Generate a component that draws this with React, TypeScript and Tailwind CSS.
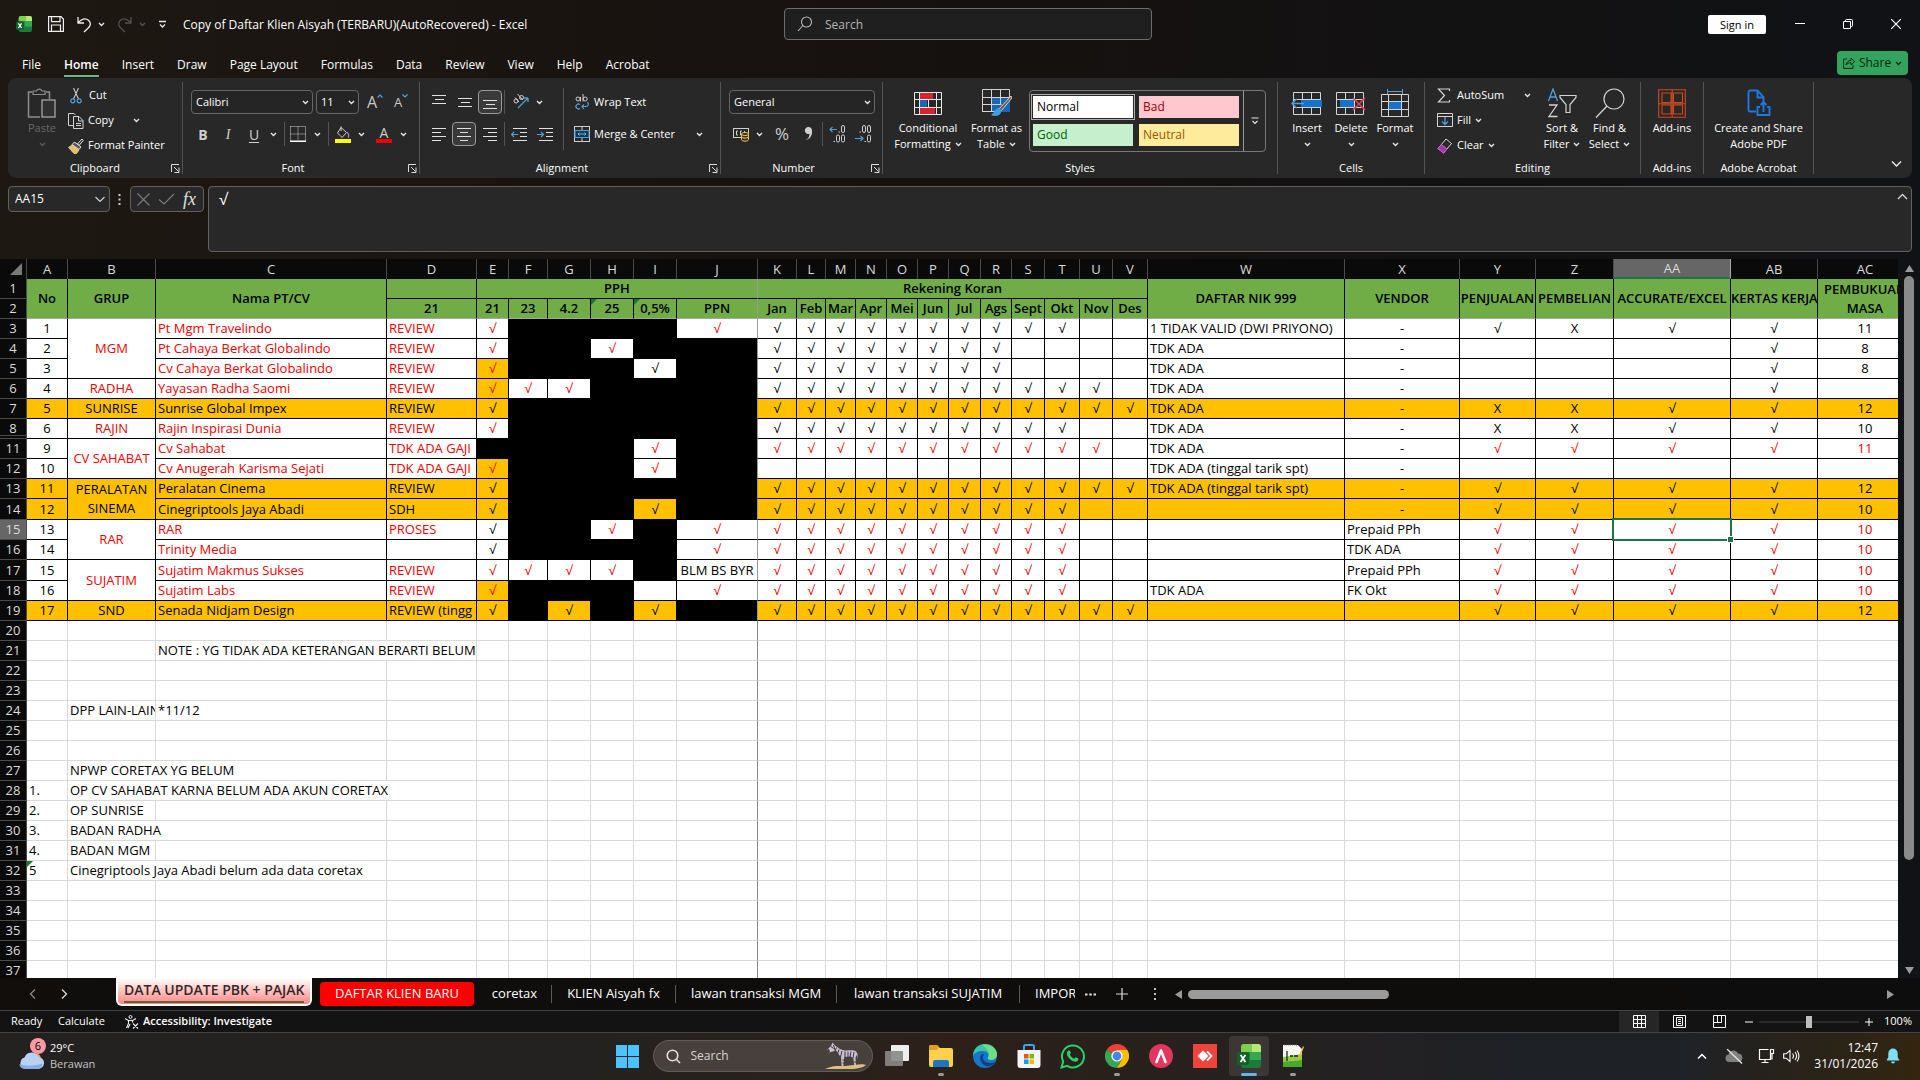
import React from "react";
import type { ReactNode } from "react";

/* ---------- small building blocks ---------- */

function Svg({ w, h, children, vb }: { w: number; h: number; children: ReactNode; vb?: string }) {
  return (
    <svg width={w} height={h} viewBox={vb ?? `0 0 ${w} ${h}`} fill="none" className="block shrink-0" aria-hidden="true">
      {children}
    </svg>
  );
}

function Chevron({ color = "#e6e6e6" }: { color?: string }) {
  return (
    <Svg w={7} h={5}>
      <path d="M1 1l2.5 2.5L6 1" stroke={color} strokeWidth="1.4" />
    </Svg>
  );
}

function IconBtn({ label, className, children }: { label: string; className: string; children: ReactNode }) {
  return (
    <button type="button" aria-label={label} className={`flex h-6 shrink-0 items-center justify-center ${className}`}>
      {children}
    </button>
  );
}

const Divider = () => <div className="my-1 w-px shrink-0 bg-[#565452]" />;

function Launcher() {
  return (
    <button type="button" aria-label="More options" className="absolute right-0.5 top-1.5">
      <Svg w={9} h={9}>
        <path d="M0.5 8V0.5H8M3 3l4.5 4.5M8 3.5V8.5H3.5" stroke="#dcdcdc" />
      </Svg>
    </button>
  );
}

function Group({ name, className, launcher, labelClass = "", children }: { name: string; className: string; launcher?: boolean; labelClass?: string; children: ReactNode }) {
  return (
    <>
      <section aria-label={name} className={`flex shrink-0 flex-col ${className}`}>
        <div className="flex h-20">{children}</div>
        <div className={`relative h-5 text-center leading-5 ${labelClass}`}>
          {name}
          {launcher && <Launcher />}
        </div>
      </section>
      <Divider />
    </>
  );
}

function Big({ className, icon, lines, chevron }: { className: string; icon: ReactNode; lines: string[]; chevron?: boolean }) {
  return (
    <button type="button" className={`flex shrink-0 flex-col items-center pt-2 ${className}`}>
      <span className="flex h-[34px] items-center justify-center">{icon}</span>
      {lines.map((l, i) => (
        <span key={l} className="flex items-center gap-1 whitespace-nowrap leading-4">
          {l}
          {chevron && lines.length > 1 && i === lines.length - 1 && <Chevron />}
        </span>
      ))}
      {chevron && lines.length === 1 && (
        <span className="flex h-4 items-center">
          <Chevron />
        </span>
      )}
    </button>
  );
}

/* ---------- icons ---------- */

const ExcelLogo = ({ size }: { size: number }) => (
  <Svg w={size} h={size} vb="0 0 24 24">
    <rect x="4" y="0" width="20" height="24" rx="3" fill="#1e7a3a" />
    <path d="M4 3a3 3 0 0 1 3-3h9v8H4z" fill="#7ccf4c" />
    <path d="M15 0h6a3 3 0 0 1 3 3v5h-9z" fill="#b5ea72" />
    <path d="M13 8h11v8H13z" fill="#35a850" />
    <rect x="0" y="8" width="12" height="13" rx="2.5" fill="#14602d" />
    <path d="M3.6 11l4.8 7M8.4 11l-4.8 7" stroke="#fff" strokeWidth="1.8" />
  </Svg>
);

const lineSets: Record<string, [number, number][]> = {
  left: [[0, 14], [0, 9], [0, 14], [0, 9]],
  center: [[0, 14], [3, 11], [0, 14], [3, 11]],
  right: [[0, 14], [5, 14], [0, 14], [5, 14]],
};

const Lines = ({ kind }: { kind: string }) => (
  <Svg w={14} h={15}>
    {lineSets[kind].map(([a, b], i) => (
      <path key={i} d={`M${a} ${1.5 + i * 4}H${b}`} stroke="#e0e0e0" />
    ))}
  </Svg>
);

const VLines = ({ top }: { top: number }) => (
  <Svg w={14} h={18}>
    <path d={`M0 ${top + 0.5}h14M3 ${top + 4.5}h9M0 ${top + 8.5}h14`} stroke="#e0e0e0" />
  </Svg>
);

const Indent = ({ out }: { out?: boolean }) => (
  <Svg w={16} h={15}>
    <path d="M2 1.5h14M9 5.5h7M9 9.5h7M2 13.5h14" stroke="#e0e0e0" />
    <path d={out ? "M7 7.5H0.5M3 5L0.5 7.5 3 10" : "M0 7.5h6.500M4 5l2.500 2.500L4 10"} stroke="#4f9fd8" strokeWidth="1.2" />
  </Svg>
);

const Decimals = ({ inc }: { inc?: boolean }) => (
  <Svg w={17} h={18}>
    {inc ? (
      <>
        <path d="M8 4.500H1M3.500 2L1 4.500 3.500 7" stroke="#4f9fd8" strokeWidth="1.2" />
        <rect x="12.500" y=".500" width="3" height="7" rx="1.500" stroke="#d0d0d0" />
        <rect x="7.500" y="10" width="3" height="7" rx="1.500" stroke="#d0d0d0" />
        <rect x="12.500" y="10" width="3" height="7" rx="1.500" stroke="#d0d0d0" />
        <path d="M9.500 7h1.500M4.500 16.500H6" stroke="#d0d0d0" />
      </>
    ) : (
      <>
        <rect x="7.500" y=".500" width="3" height="7" rx="1.500" stroke="#d0d0d0" />
        <rect x="12.500" y=".500" width="3" height="7" rx="1.500" stroke="#d0d0d0" />
        <rect x="12.500" y="10" width="3" height="7" rx="1.500" stroke="#d0d0d0" />
        <path d="M4.500 7H6M9.500 16.500H11" stroke="#d0d0d0" />
        <path d="M0 13.500h8M5.500 11L8 13.500 5.500 16" stroke="#4f9fd8" strokeWidth="1.2" />
      </>
    )}
  </Svg>
);

/* ---------- title bar and menu ---------- */

function TitleBar() {
  return (
    <header className="flex h-12 shrink-0 items-center pl-4">
      <div className="flex min-w-0 flex-1 items-center">
        <ExcelLogo size={16} />
        <button type="button" aria-label="Save" className="ml-4">
          <Svg w={16} h={16}>
            <path d="M0.600 0.600h12.400l2.400 2.400v12.400H0.600zM3.500 0.600v5h8.500v-5M3.500 15.400V9h9v6.400" stroke="#f0f0f0" strokeWidth="1.2" />
          </Svg>
        </button>
        <button type="button" aria-label="Undo" className="ml-3 flex items-center gap-1.5">
          <Svg w={16} h={17}>
            <path d="M2 1v6h6M2.300 6.700C5 3 9.500 1.500 12.500 4.300s2 5.500-.5 8L8 16" stroke="#f0f0f0" strokeWidth="1.3" />
          </Svg>
          <Chevron />
        </button>
        <button type="button" aria-label="Redo" className="ml-3 flex items-center gap-1.5">
          <Svg w={16} h={17}>
            <path d="M14 1v6H8M13.700 6.700C11 3 6.500 1.500 3.500 4.300s-2 5.500.5 8L8 16" stroke="#55514d" strokeWidth="1.3" />
          </Svg>
          <Chevron color="#55514d" />
        </button>
        <button type="button" aria-label="Customize Quick Access Toolbar" className="ml-3">
          <Svg w={9} h={9}>
            <path d="M1 1.500h7M2 4.500l2.500 2.500L7 4.500" stroke="#e6e6e6" strokeWidth="1.3" />
          </Svg>
        </button>
        <h1 className="ml-4 truncate pt-0.5 text-[12px] text-white">Copy of Daftar Klien Aisyah (TERBARU)(AutoRecovered) - Excel</h1>
      </div>
      <label className="flex h-8 w-[368px] items-center rounded border border-[#6f6d6b] bg-[#1f1f1f] pl-3">
        <Svg w={16} h={16}>
          <circle cx="9.500" cy="6" r="5" stroke="#b8b8b8" strokeWidth="1.1" />
          <path d="M6 9.500L1 15" stroke="#b8b8b8" strokeWidth="1.1" />
        </Svg>
        <input aria-label="Search" placeholder="Search" className="ml-3 w-64 bg-transparent pt-px text-[12px] outline-none placeholder:text-[#b4b4b4]" />
      </label>
      <div className="flex flex-1 items-center justify-end">
        <button type="button" className="mr-2.5 h-[19px] w-[58px] rounded-xs bg-white leading-[19px] text-black">Sign in</button>
        <IconBtn label="Minimize" className="w-12">
          <Svg w={10} h={10}><path d="M0 4.500h10" stroke="#fff" /></Svg>
        </IconBtn>
        <IconBtn label="Restore" className="w-12">
          <Svg w={10} h={10}><path d="M0.500 2.500h7v7h-7zM2.500 2.500v-1q0-1 1-1h5q1 0 1 1v5q0 1-1 1h-1" stroke="#fff" /></Svg>
        </IconBtn>
        <IconBtn label="Close" className="w-12">
          <Svg w={10} h={10}><path d="M0 0l10 10M10 0L0 10" stroke="#fff" strokeWidth="1.2" /></Svg>
        </IconBtn>
      </div>
    </header>
  );
}

const menus = ["File", "Home", "Insert", "Draw", "Page Layout", "Formulas", "Data", "Review", "View", "Help", "Acrobat"];

function MenuBar() {
  return (
    <nav className="flex h-[30px] shrink-0 items-center gap-[3px] pl-3 pr-3 text-[12px]">
      {menus.map((m) => (
        <button key={m} type="button" className="h-full px-2.5 pt-[5px]">
          <span className={m === "Home" ? "block border-b-2 border-[#6cb58a] font-semibold leading-5" : "block border-b-2 border-transparent leading-5"}>{m}</span>
        </button>
      ))}
      <button type="button" className="ml-auto flex h-6 w-[71px] items-center justify-center gap-1 rounded bg-[#32a45e] text-[12px] text-[#08240f]">
        <Svg w={12} h={12}>
          <path d="M4 2H0.600v9.400h9.400V8M3 8c.5-3 2.500-4.500 5-4.500V1l3.500 3.700L8 8V5.800C6 5.800 4.500 6.300 3 8z" stroke="#0c2c15" />
        </Svg>
        Share
        <Chevron color="#0c2c15" />
      </button>
    </nav>
  );
}

/* ---------- ribbon ---------- */

function Select({ label, value, className }: { label: string; value: string; className: string }) {
  return (
    <div className={`relative h-6 shrink-0 ${className}`}>
      <select aria-label={label} className="h-full w-full appearance-none rounded border border-[#686664] bg-[#252525] pl-1 text-[11px] text-white outline-none">
        <option>{value}</option>
      </select>
      <span className="pointer-events-none absolute right-1 top-2.5"><Chevron /></span>
    </div>
  );
}

const VSep = ({ className }: { className: string }) => <div className={`h-6 w-px shrink-0 bg-[#565452] ${className}`} />;

function Clipboard() {
  return (
    <Group name="Clipboard" className="w-[174px]" launcher>
      <button type="button" className="flex w-[60px] flex-col items-center pl-2 pt-2 text-[#686868]">
        <Svg w={30} h={34}>
          <path d="M5 6H1.500v25H13M19 6h3.500v7" stroke="#8e8e8e" strokeWidth="1.500" />
          <path d="M6 8.500V5h3.500a3 3 0 0 1 5.500 0H18v3.500z" stroke="#8e8e8e" strokeWidth="1.200" />
          <rect x="15" y="14" width="13" height="17" fill="#303030" stroke="#b0b0b0" strokeWidth="1.200" />
        </Svg>
        <span className="leading-4">Paste</span>
        <span className="flex h-4 items-center"><Chevron color="#5a5a5a" /></span>
      </button>
      <div className="flex flex-col pt-[5px]">
        <button type="button" className="flex h-[26px] items-center gap-1.5 pl-0.5">
          <Svg w={13} h={16}>
            <path d="M3.500 0l5 11M8.500 0l-5 11" stroke="#c8c8c8" strokeWidth="1.100" />
            <circle cx="2.800" cy="12.800" r="2" stroke="#4f9fd8" strokeWidth="1.200" />
            <circle cx="9.200" cy="12.800" r="2" stroke="#4f9fd8" strokeWidth="1.200" />
          </Svg>
          Cut
        </button>
        <button type="button" className="flex h-[26px] items-center">
          <Svg w={16} h={16}>
            <path d="M5 12.500H0.500V0.500H6l1.500 1.500" stroke="#d4d4d4" />
            <path d="M5.500 3.500h5.500l4 4v8H5.500zM10.500 3.500V8H15M8 10.500h5M8 12.500h5" stroke="#d4d4d4" />
          </Svg>
          <span className="ml-1 w-[45px] text-left">Copy</span>
          <Chevron />
        </button>
        <button type="button" className="flex h-[26px] items-center gap-1 whitespace-nowrap">
          <Svg w={16} h={16}>
            <path d="M9.500 6L14 1l1.200 1.500L11 7.500z" stroke="#e4e4e4" />
            <path d="M6.500 4l6.500 5-2 2.500L4 6.500z" fill="#555" stroke="#e4e4e4" />
            <path d="M4 7L.500 9.500 6 15.500h2.500L11 12z" fill="#e7bc6a" stroke="#f3d79a" strokeWidth=".800" />
          </Svg>
          Format Painter
        </button>
      </div>
    </Group>
  );
}

function FontGroup() {
  return (
    <Group name="Font" className="w-[236px]" labelClass="pr-4" launcher>
      <div className="flex flex-col gap-2 pl-2 pt-3">
        <div className="flex items-center">
          <Select label="Font name" value="Calibri" className="w-[122px]" />
          <Select label="Font size" value="11" className="ml-[3px] w-[43px]" />
          <IconBtn label="Increase font size" className="ml-1 w-6">
            <span className="text-[16px] leading-6 text-[#c8c8c8]">A</span>
            <span className="-mt-3"><Svg w={6} h={4}><path d="M.500 3.500L3 1l2.500 2.500" stroke="#4f9fd8" strokeWidth="1.200" /></Svg></span>
          </IconBtn>
          <IconBtn label="Decrease font size" className="ml-0.5 w-6">
            <span className="text-[13px] leading-6 text-[#c8c8c8]">A</span>
            <span className="-mt-3"><Svg w={6} h={4}><path d="M.500 .500L3 3 5.500.500" stroke="#4f9fd8" strokeWidth="1.200" /></Svg></span>
          </IconBtn>
        </div>
        <div className="flex items-center text-[14px] text-[#cfcfcf]">
          <IconBtn label="Bold" className="w-6 font-bold">B</IconBtn>
          <IconBtn label="Italic" className="w-[26px] font-['Liberation_Serif',serif] italic">I</IconBtn>
          <IconBtn label="Underline" className="w-[26px] underline underline-offset-2">U</IconBtn>
          <IconBtn label="Underline options" className="w-3"><Chevron /></IconBtn>
          <VSep className="mx-[5px]" />
          <IconBtn label="Borders" className="w-4">
            <Svg w={16} h={16}>
              <path d="M.500 .500h15v15M.500 .500v15M8 .500v14M.500 8h15" stroke="#cfcfcf" strokeDasharray="1 1" />
              <path d="M0 15.200h16" stroke="#fff" strokeWidth="1.500" />
            </Svg>
          </IconBtn>
          <IconBtn label="Border options" className="w-[22px]"><Chevron /></IconBtn>
          <VSep className="" />
          <IconBtn label="Fill color" className="w-7">
            <Svg w={16} h={17}>
              <path d="M6 1.500l5.500 5-4.500 5-4.500-4.500z" stroke="#d0d0d0" />
              <path d="M6 5V.500" stroke="#d0d0d0" />
              <path d="M12 6c2 2 2 5 1 5.500" stroke="#9a7fd0" strokeWidth="1.400" />
              <rect y="13" width="16" height="4" fill="#ffff00" />
            </Svg>
          </IconBtn>
          <IconBtn label="Fill color options" className="w-2"><Chevron /></IconBtn>
          <IconBtn label="Font color" className="ml-1 w-[30px] flex-col">
            <span className="leading-[13px]">A</span>
            <span className="h-1 w-4 bg-[#f00000]" />
          </IconBtn>
          <IconBtn label="Font color options" className="w-2"><Chevron /></IconBtn>
        </div>
      </div>
    </Group>
  );
}

function Alignment() {
  return (
    <Group name="Alignment" className="w-[300px]" labelClass="pr-4" launcher>
      <div className="flex flex-col gap-2 pl-[5px] pt-3">
        <div className="flex items-center">
          <IconBtn label="Top align" className="w-[27px]"><VLines top={2} /></IconBtn>
          <IconBtn label="Middle align" className="w-[26px]"><VLines top={5} /></IconBtn>
          <IconBtn label="Bottom align" className="w-6 rounded border border-[#9a9a9a] bg-[#3a3a3a]"><VLines top={7} /></IconBtn>
          <VSep className="mx-0.5" />
          <IconBtn label="Orientation" className="w-7">
            <Svg w={18} h={18}>
              <path d="M6 15L16 5M16 5h-4M16 5v4" stroke="#4f9fd8" strokeWidth="1.300" />
              <circle cx="4" cy="8" r="2" stroke="#cfcfcf" /><path d="M3 4.500L7 9" stroke="#cfcfcf" />
              <circle cx="9.500" cy="4.500" r="2" stroke="#cfcfcf" /><path d="M5.500 1L11 7" stroke="#cfcfcf" />
            </Svg>
          </IconBtn>
          <IconBtn label="Orientation options" className="w-2"><Chevron /></IconBtn>
        </div>
        <div className="flex items-center">
          <IconBtn label="Align left" className="w-[27px]"><Lines kind="left" /></IconBtn>
          <IconBtn label="Center" className="w-6 rounded border border-[#9a9a9a] bg-[#3a3a3a]"><Lines kind="center" /></IconBtn>
          <IconBtn label="Align right" className="w-7"><Lines kind="right" /></IconBtn>
          <VSep className="" />
          <IconBtn label="Decrease indent" className="w-[28px]"><Indent out /></IconBtn>
          <IconBtn label="Increase indent" className="w-6"><Indent /></IconBtn>
        </div>
      </div>
      <div className="ml-[6px] mt-2.5 h-[62px] w-px shrink-0 bg-[#565452]" />
      <div className="flex flex-col gap-2 pl-2.5 pt-3">
        <button type="button" className="flex h-6 items-center gap-1">
          <Svg w={16} h={17}>
            <circle cx="4" cy="5" r="2" stroke="#cfcfcf" /><path d="M6.500 3v4.500M9 0v7.500" stroke="#cfcfcf" /><circle cx="11.200" cy="5" r="2" stroke="#cfcfcf" />
            <path d="M6 10.500a2.500 2.500 0 1 0 0 4M8 12.500h4c3 0 3-4 1-4M10 10.500L8 12.500l2 2.500" stroke="#4f9fd8" strokeWidth="1.200" />
          </Svg>
          Wrap Text
        </button>
        <button type="button" className="flex h-6 items-center gap-1 whitespace-nowrap">
          <Svg w={16} h={16}>
            <rect x=".500" y=".500" width="15" height="15" stroke="#cfcfcf" />
            <path d="M.500 4.500h15M.500 11.500h15M8 .500v4M8 11.500v4" stroke="#cfcfcf" />
            <rect x="1" y="4.500" width="14" height="7" fill="#173650" stroke="#4f9fd8" />
            <path d="M4 8h8M5.500 6.500L4 8l1.500 1.500M10.500 6.500L12 8l-1.500 1.500" stroke="#6fb6ea" />
          </Svg>
          <span className="w-[86px] text-left">Merge &amp; Center</span>
          <span className="ml-3"><Chevron /></span>
        </button>
      </div>
    </Group>
  );
}

function NumberGroup() {
  return (
    <Group name="Number" className="w-[161px]" labelClass="pr-4" launcher>
      <div className="flex flex-col gap-2 pl-2 pt-3">
        <Select label="Number format" value="General" className="w-[146px]" />
        <div className="flex items-center text-[#cfcfcf]">
          <IconBtn label="Accounting format" className="w-6">
            <Svg w={17} h={15}>
              <rect x=".500" y="1.500" width="15" height="9" stroke="#cfcfcf" />
              <path d="M5 4H3.500v4H5M9 4H7.500v4H9M11.500 4v3" stroke="#cfcfcf" />
              <path d="M8.500 7v5.500c0 2.200 7 2.200 7 0V7" fill="#3a3320" stroke="#f0c95c" /><ellipse cx="12" cy="7" rx="3.500" ry="1.500" fill="#2a2618" stroke="#f0c95c" /><path d="M8.500 10c1 1.500 6 1.500 7 0" stroke="#f0c95c" />
            </Svg>
          </IconBtn>
          <IconBtn label="Accounting options" className="w-3"><Chevron /></IconBtn>
          <IconBtn label="Percent style" className="ml-[5px] w-6 text-[17px]">%</IconBtn>
          <IconBtn label="Comma style" className="w-7">
            <Svg w={9} h={14}><path d="M4.500 0a3.500 3.500 0 1 0 1 6.800C5.500 10 4 12 1.500 13c4-.5 7-4 6.500-9A3.600 3.600 0 0 0 4.500 0z" fill="#cfcfcf" /></Svg>
          </IconBtn>
          <VSep className="" />
          <IconBtn label="Increase decimal" className="w-7"><Decimals inc /></IconBtn>
          <IconBtn label="Decrease decimal" className="w-6"><Decimals /></IconBtn>
        </div>
      </div>
    </Group>
  );
}

const swatch = "h-[22px] w-[100px] pl-1 text-left text-[12px] leading-[22px]";

function Styles() {
  return (
    <Group name="Styles" className="w-[394px]">
      <Big
        className="w-[90px]"
        chevron
        lines={["Conditional", "Formatting"]}
        icon={
          <Svg w={28} h={23}>
            <path d="M6 1h13v6H6zM6 16h15v6H6z" fill="#d9232e" /><path d="M6 8h7v7H6z" fill="#1668b8" />
            <path d="M.500 .500h27v22H.500zM.500 7.500h27M.500 15.500h27M5.500 .500v22M14.500 7.500v8M22.500 .500v22" stroke="#e8e8e8" />
          </Svg>
        }
      />
      <Big
        className="w-[47px]"
        chevron
        lines={["Format as", "Table"]}
        icon={
          <Svg w={30} h={28}>
            <path d="M9 8h19v15H9z" fill="#1668b8" />
            <path d="M.500 23V.500h27v8M.500 8.500h27M.500 15.500h19M.500 22.500H13M9.500 .500v22M18.500 .500v15" stroke="#d4d4d4" />
            <path d="M29 7L17 20l2 2L30 9z" fill="#6d5a4c" stroke="#d8d0c8" /><path d="M17 19c-4 0-4 4-8 7 4 2 10 1 10.500-4.500z" fill="#3f9ee6" />
          </Svg>
        }
      />
      <div className="ml-[9px] mt-3 flex h-[62px] rounded border border-[#777]">
        <div className="grid grid-cols-2 content-center gap-x-1.5 gap-y-1.5 pl-[3px] pr-1">
          <button type="button" className={`${swatch} bg-white text-black outline outline-offset-1 outline-[#b0b0b0]`}>Normal</button>
          <button type="button" className={`${swatch} bg-[#ffc7ce] text-[#9c0006]`}>Bad</button>
          <button type="button" className={`${swatch} bg-[#c6efce] text-[#006100]`}>Good</button>
          <button type="button" className={`${swatch} bg-[#ffeb9c] text-[#9c5700]`}>Neutral</button>
        </div>
        <button type="button" aria-label="More styles" className="flex w-[22px] items-center justify-center rounded-r border-l border-[#999]">
          <Svg w={8} h={8}><path d="M.500 1h7M1.500 4L4 6.500 6.500 4" stroke="#e6e6e6" strokeWidth="1.200" /></Svg>
        </button>
      </div>
    </Group>
  );
}

function Cells() {
  return (
    <Group name="Cells" className="w-[146px]">
      <Big className="ml-[7px] w-11" chevron lines={["Insert"]} icon={
        <Svg w={32} h={23}>
          <path d="M2.500 .500h27v22h-27zM2.500 7.500h27M2.500 15.500h27M11.500 .500v22M20.500 .500v22" stroke="#d4d4d4" />
          <rect x="10" y="8" width="21" height="7" fill="#1673cc" /><path d="M13 11.500H1M5.500 7L1 11.500 5.500 16" stroke="#4f9fd8" strokeWidth="1.500" />
        </Svg>} />
      <Big className="w-11" chevron lines={["Delete"]} icon={
        <Svg w={30} h={23}>
          <path d="M.500 .500h27v22H.500zM.500 7.500h27M.500 15.500h27M9.500 .500v22M18.500 .500v22" stroke="#d4d4d4" />
          <rect x="4" y="8" width="14" height="7" fill="#1673cc" /><path d="M17 6l12 12M29 6L17 18" stroke="#d8434e" strokeWidth="1.700" />
        </Svg>} />
      <Big className="w-11" chevron lines={["Format"]} icon={
        <Svg w={28} h={28}>
          <path d="M6 2.500h16M6.500 0v5M21.500 0v5" stroke="#4f9fd8" />
          <path d="M.500 5.500h27v22H.500zM.500 12.500h27M.500 20.500h27M7.500 5.500v22M20.500 5.500v22" stroke="#d4d4d4" />
          <rect x="8" y="13" width="12" height="7" fill="#1673cc" />
        </Svg>} />
    </Group>
  );
}

function Editing() {
  return (
    <Group name="Editing" className="w-[215px]">
      <div className="flex w-[112px] flex-col pl-3 pt-[5px]">
        <button type="button" className="flex h-[26px] items-center gap-1.5">
          <Svg w={14} h={15}><path d="M12.500 3V1H1.500L7.500 7.500l-6 6.500h11v-2" stroke="#d4d4d4" strokeWidth="1.200" /></Svg>
          <span className="w-[61px] text-left">AutoSum</span>
          <Chevron />
        </button>
        <button type="button" className="flex h-[26px] items-center gap-1">
          <Svg w={16} h={15}><path d="M.500 .500h15v13H.500zM.500 3.500h15" stroke="#d4d4d4" /><path d="M8 4v7M5 8.500l3 3 3-3" stroke="#4f9fd8" strokeWidth="1.300" /></Svg>
          Fill
          <Chevron />
        </button>
        <button type="button" className="flex h-[26px] items-center gap-1">
          <Svg w={16} h={16}><path d="M9 1l5.500 4.500L6.500 15 1 10.500z" stroke="#d4d4d4" /><path d="M4.500 6.500L10 11l-3.500 4L1 10.500z" fill="#a532b0" stroke="#c65bd0" /></Svg>
          Clear
          <Chevron />
        </button>
      </div>
      <Big className="w-[50px]" chevron lines={["Sort &", "Filter"]} icon={
        <Svg w={30} h={30}>
          <path d="M1.500 13L6 1l4.500 12M3 9h6" stroke="#4f9fd8" strokeWidth="1.300" /><path d="M2 17h8L2 28.500h8.500" stroke="#d4d4d4" strokeWidth="1.300" />
          <path d="M13 7.500h16v2l-6 7v8h-4v-8l-6-7z" stroke="#d4d4d4" strokeWidth="1.200" />
        </Svg>} />
      <Big className="w-[45px]" chevron lines={["Find &", "Select"]} icon={
        <Svg w={30} h={30}><circle cx="19" cy="11" r="10" stroke="#d4d4d4" strokeWidth="1.200" /><path d="M12 18L1 29.500" stroke="#d4d4d4" strokeWidth="1.300" /></Svg>} />
    </Group>
  );
}

function Ribbon() {
  return (
    <div className="mx-2 flex h-[100px] shrink-0 overflow-hidden rounded-lg bg-[#282828]">
      <Clipboard />
      <FontGroup />
      <Alignment />
      <NumberGroup />
      <Styles />
      <Cells />
      <Editing />
      <Group name="Add-ins" className="w-[62px]">
        <Big className="w-full" lines={["Add-ins"]} icon={
          <Svg w={28} h={29}>
            <path d="M.700 .700h26.600v27.600H.700zM4 4h9v9.500H4zM15.500 4h9v9.500h-9zM4 16h9v9H4zM15.500 16h9v9h-9zM14.200 .700v27.600M.700 14.700h26.600" stroke="#cf4a1c" strokeWidth="1.100" />
          </Svg>} />
      </Group>
      <Group name="Adobe Acrobat" className="w-[109px]">
        <Big className="w-full" lines={["Create and Share", "Adobe PDF"]} icon={
          <Svg w={24} h={28}>
            <path d="M9 22.500H3a1.500 1.500 0 0 1-1.500-1.500V3A1.500 1.500 0 0 1 3 1.500h7.500l6 6.500v5M10.500 2v6.500h6" stroke="#1f78e0" strokeWidth="1.900" />
            <path d="M13 18h-2.500v8h12v-8H20M16.500 23v-9.500M13.500 16l3-3 3 3" stroke="#1f78e0" strokeWidth="1.900" />
          </Svg>} />
      </Group>
      <button type="button" aria-label="Collapse ribbon" className="mb-2.5 ml-auto mr-2.5 self-end">
        <Svg w={11} h={8}><path d="M1 1.500l4.500 4.500L10 1.500" stroke="#e6e6e6" strokeWidth="1.500" /></Svg>
      </button>
    </div>
  );
}

function FormulaBar() {
  return (
    <div className="mx-2 mb-[7px] mt-2 flex h-[66px] shrink-0 items-start">
      <div className="flex h-[26px] w-[102px] items-center justify-between rounded border border-[#63605d] bg-[#282828] pl-1.5 pr-1">
        <input aria-label="Name Box" defaultValue="AA15" className="w-16 bg-transparent text-[12px] outline-none" />
        <Svg w={10} h={7}><path d="M.500 1L5 5.500 9.500 1" stroke="#d0d0d0" strokeWidth="1.200" /></Svg>
      </div>
      <span className="w-5 pl-2 pt-2">
        <Svg w={3} h={11}><path d="M.500 0v2h2V0zM.500 4.500v2h2v-2zM.500 9v2h2V9z" fill="#d0d0d0" /></Svg>
      </span>
      <div className="flex h-[26px] w-[74px] items-center gap-2 rounded border border-[#63605d] bg-[#282828] pl-1.5">
        <button type="button" aria-label="Cancel"><Svg w={13} h={13}><path d="M.500 .500l12 12M12.500 .500l-12 12" stroke="#7c7c7c" strokeWidth="1.100" /></Svg></button>
        <button type="button" aria-label="Enter"><Svg w={17} h={12}><path d="M1 6.500L6 11 16 1" stroke="#7c7c7c" strokeWidth="1.100" /></Svg></button>
        <button type="button" aria-label="Insert function" className="font-['Liberation_Serif',serif] text-[18px] italic leading-5 text-[#e0e0e0]">fx</button>
      </div>
      <div className="ml-1 flex h-full flex-1 rounded border border-[#63605d] bg-[#282828]">
        <textarea aria-label="Formula bar" defaultValue="√" className="h-full flex-1 resize-none bg-transparent pl-2.5 pt-0.5 text-[16px] leading-5 outline-none" />
        <button type="button" aria-label="Collapse formula bar" className="mr-[3px] mt-1.5 self-start">
          <Svg w={11} h={7}><path d="M1 6l4.500-4.500L10 6" stroke="#d8d8d8" strokeWidth="1.300" /></Svg>
        </button>
      </div>
    </div>
  );
}

/* ---------- worksheet ---------- */

const columns: [string, number][] = [
  ["A", 41], ["B", 88], ["C", 231], ["D", 90], ["E", 32], ["F", 39], ["G", 43], ["H", 43], ["I", 43], ["J", 81],
  ["K", 39], ["L", 29], ["M", 30], ["N", 31], ["O", 31], ["P", 31], ["Q", 32], ["R", 31], ["S", 33], ["T", 35], ["U", 33], ["V", 35],
  ["W", 197], ["X", 115], ["Y", 76], ["Z", 78], ["AA", 117], ["AB", 87], ["AC", 95],
];

const months = ["Jan", "Feb", "Mar", "Apr", "Mei", "Jun", "Jul", "Ags", "Sept", "Okt", "Nov", "Des"];

type Row = {
  n: number; no: number; grup?: [string, number, string]; name: string; d: string;
  pph: string; months: number; red?: boolean; w: string; x: string; last: string; ac: string; orange?: boolean; tall?: boolean;
};

/* pph holds one letter for each of E–J: r/k red or black tick, R red tick on orange, # black cell, . empty, B unpaid */
const rows: Row[] = [
  { n: 3, no: 1, grup: ["MGM", 3, "r"], name: "Pt Mgm Travelindo", d: "REVIEW", pph: "r####r", months: 10, w: "1 TIDAK VALID (DWI PRIYONO)", x: "-", last: "√X√√", ac: "11" },
  { n: 4, no: 2, name: "Pt Cahaya Berkat Globalindo", d: "REVIEW", pph: "r##r##", months: 8, w: "TDK ADA", x: "-", last: "   √", ac: "8" },
  { n: 5, no: 3, name: "Cv Cahaya Berkat Globalindo", d: "REVIEW", pph: "R###k#", months: 8, w: "TDK ADA", x: "-", last: "   √", ac: "8" },
  { n: 6, no: 4, grup: ["RADHA", 1, "r"], name: "Yayasan Radha Saomi", d: "REVIEW", pph: "Rrr###", months: 11, w: "TDK ADA", x: "-", last: "   √", ac: "" },
  { n: 7, no: 5, grup: ["SUNRISE", 1, "o"], name: "Sunrise Global Impex", d: "REVIEW", pph: "k#####", months: 12, w: "TDK ADA", x: "-", last: "XX√√", ac: "12", orange: true },
  { n: 8, no: 6, grup: ["RAJIN", 1, "r"], name: "Rajin Inspirasi Dunia", d: "REVIEW", pph: "r#####", months: 10, w: "TDK ADA", x: "-", last: "XX√√", ac: "10" },
  { n: 11, no: 9, grup: ["CV SAHABAT", 2, "r"], name: "Cv Sahabat", d: "TDK ADA GAJI", pph: "####r#", months: 11, red: true, w: "TDK ADA", x: "-", last: "√√√√", ac: "11" },
  { n: 12, no: 10, name: "Cv Anugerah Karisma Sejati", d: "TDK ADA GAJI", pph: "R###r#", months: 0, w: "TDK ADA (tinggal tarik spt)", x: "-", last: "    ", ac: "" },
  { n: 13, no: 11, grup: ["PERALATAN SINEMA", 2, "o"], name: "Peralatan Cinema", d: "REVIEW", pph: "k#####", months: 12, w: "TDK ADA (tinggal tarik spt)", x: "-", last: "√√√√", ac: "12", orange: true },
  { n: 14, no: 12, name: "Cinegriptools Jaya Abadi", d: "SDH", pph: "k###k#", months: 10, w: "", x: "-", last: "√√√√", ac: "10", orange: true, tall: true },
  { n: 15, no: 13, grup: ["RAR", 2, "r"], name: "RAR", d: "PROSES", pph: "k##r#r", months: 10, red: true, w: "", x: "Prepaid PPh", last: "√√√√", ac: "10" },
  { n: 16, no: 14, name: "Trinity Media", d: "", pph: "k####r", months: 10, red: true, w: "", x: "TDK ADA", last: "√√√√", ac: "10" },
  { n: 17, no: 15, grup: ["SUJATIM", 2, "r"], name: "Sujatim Makmus Sukses", d: "REVIEW", pph: "rrrr#B", months: 10, red: true, w: "", x: "Prepaid PPh", last: "√√√√", ac: "10", tall: true },
  { n: 18, no: 16, name: "Sujatim Labs", d: "REVIEW", pph: "R###.r", months: 10, red: true, w: "TDK ADA", x: "FK Okt", last: "√√√√", ac: "10" },
  { n: 19, no: 17, grup: ["SND", 1, "o"], name: "Senada Nidjam Design", d: "REVIEW (tingg", pph: "k#k#k#", months: 12, w: "", x: "", last: "√√√√", ac: "12", orange: true },
];

const notes: Record<number, [number, string, number][]> = {
  21: [[2, "NOTE : YG TIDAK ADA KETERANGAN BERARTI BELUM", 2]],
  24: [[1, "DPP LAIN-LAIN", 1], [2, "*11/12", 1]],
  27: [[1, "NPWP CORETAX YG BELUM", 2]],
  28: [[0, "1.", 1], [1, "OP CV SAHABAT KARNA BELUM ADA AKUN CORETAX", 3]],
  29: [[0, "2.", 1], [1, "OP SUNRISE", 1]],
  30: [[0, "3.", 1], [1, "BADAN RADHA", 2]],
  31: [[0, "4.", 1], [1, "BADAN MGM", 1]],
  32: [[0, "5", 1], [1, "Cinegriptools Jaya Abadi belum ada data coretax", 2]],
};

const cell = "overflow-hidden whitespace-nowrap border-b border-r border-black p-0";
const head = "overflow-hidden whitespace-nowrap border-b border-r border-black bg-[#70ad47] p-0 font-semibold";
const Tri = () => (
  <span className="absolute left-0 top-0"><Svg w={6} h={6}><path d="M0 0h6L0 6z" fill="#0f7b2e" /></Svg></span>
);

function RowHead({ n }: { n: number }) {
  return (
    <th scope="row" className={`relative border-b border-r border-[#4a4a4a] p-0 text-center font-normal text-[#dcdcdc] ${n === 15 ? "bg-[#666]" : "bg-[#0a0a0a]"}`}>
      {n}
      {n === 8 && <span className="absolute inset-x-0 bottom-0.5 h-px bg-[#4a4a4a]" />}
    </th>
  );
}

function PphCell({ code, orange, last }: { code: string; orange?: boolean; last: boolean }) {
  const bg = code === "#" ? "bg-black" : code === "R" || (orange && code === "k") ? "bg-[#ffc000]" : "bg-white";
  const fg = code === "r" || code === "R" ? "text-[#f00000]" : "text-black";
  const edge = last ? "border-r-[#9a9a9a]" : "";
  return <td className={`${cell} text-center ${bg} ${fg} ${edge}`}>{code === "B" ? "BLM BS BYR" : "rRk".includes(code) ? "√" : ""}</td>;
}

function DataRow({ r }: { r: Row }) {
  const bg = r.orange ? "bg-[#ffc000]" : "bg-white";
  const nameColor = r.orange ? "text-black" : "text-[#f00000]";
  const red = r.red ? "text-[#f00000]" : "text-black";
  const tail = r.red || r.n === 15 ? "text-[#f00000]" : "text-black";
  return (
    <tr className={`${bg} ${r.tall ? "h-[21px]" : "h-5"}`}>
      <RowHead n={r.n} />
      <td className={`${cell} text-center`}>{r.no}</td>
      {r.grup && (
        <td rowSpan={r.grup[1]} className={`${cell} text-center ${r.grup[2] === "o" ? "bg-[#ffc000]" : "bg-white text-[#f00000]"}`}>
          {r.grup[0] === "PERALATAN SINEMA" ? <>PERALATAN<br />SINEMA</> : r.grup[0]}
        </td>
      )}
      <td className={`${cell} pl-0.5 ${nameColor}`}>{r.name}</td>
      <td className={`${cell} pl-0.5 ${nameColor}`}>{r.d}</td>
      {r.pph.split("").map((c, i) => <PphCell key={i} code={c} orange={r.orange} last={i === 5} />)}
      {months.map((m, i) => <td key={m} className={`${cell} text-center ${red}`}>{i < r.months ? "√" : ""}</td>)}
      <td className={`${cell} pl-0.5`}>{r.w}</td>
      <td className={`${cell} ${r.x === "-" ? "text-center" : "pl-0.5"}`}>{r.x}</td>
      {r.last.split("").map((c, i) =>
        r.n === 15 && i === 2 ? (
          <td key={i} className={`relative border-b border-r border-black p-0 text-center ${tail}`}>
            {c}
            <span className="absolute -inset-0.5 border-2 border-[#217346]" />
            <span className="absolute -bottom-1 -right-1 size-[7px] border border-white bg-[#217346]" />
          </td>
        ) : (
          <td key={i} className={`${cell} text-center ${tail}`}>{c.trim()}</td>
        ),
      )}
      <td className={`${cell} text-center ${tail}`}>{r.ac}</td>
    </tr>
  );
}

function NoteRow({ n }: { n: number }) {
  const items = notes[n] ?? [];
  const cells: ReactNode[] = [];
  for (let c = 0; c < columns.length; ) {
    const item = items.find((t) => t[0] === c);
    const span = item ? item[2] : 1;
    cells.push(
      <td key={c} colSpan={span} className={`relative overflow-hidden whitespace-nowrap border-b border-r border-b-[#d9d9d9] p-0 pl-0.5 ${c === 9 ? "border-r-[#8a8a8a]" : "border-r-[#d9d9d9]"}`}>
        {item?.[1]}
        {n === 32 && c === 0 && <Tri />}
      </td>,
    );
    c += span;
  }
  return <tr className="h-5 bg-white"><RowHead n={n} />{cells}</tr>;
}

function Sheet() {
  return (
    <div className="flex min-h-0 flex-1">
      <div className="min-w-0 flex-1 overflow-hidden bg-white">
        <table className="w-[1913px] table-fixed border-separate border-spacing-0 text-[13px] leading-[19px] text-black">
          <colgroup>
            <col className="w-[27px]" />
            {columns.map(([name, w]) => <col key={name} style={{ width: w }} />)}
          </colgroup>
          <thead>
            <tr className="h-5 bg-[#0a0a0a]">
              <td className="border-r border-[#4a4a4a] p-0">
                <span className="flex justify-end pr-1"><Svg w={12} h={12}><path d="M12 0v12H0z" fill="#7a7a7a" /></Svg></span>
              </td>
              {columns.map(([name]) => (
                <th key={name} scope="col" className={`border-r p-0 text-center font-normal text-[#dcdcdc] ${name === "AA" ? "border-b-2 border-b-[#217346] border-r-[#aaa] bg-[#666] leading-[18px]" : "border-r-[#4a4a4a]"}`}>{name}</th>
              ))}
            </tr>
          </thead>
          <tbody>
            <tr className="h-5">
              <RowHead n={1} />
              {["No", "GRUP", "Nama PT/CV"].map((t) => <th key={t} rowSpan={2} className={`${head} border-b-[#a6a6a6]`}>{t}</th>)}
              <th className={head} />
              <th colSpan={6} className={`${head} border-r-[#9a9a9a]`}>PPH</th>
              <th colSpan={12} className={head}>Rekening Koran</th>
              {["DAFTAR NIK 999", "VENDOR", "PENJUALAN", "PEMBELIAN", "ACCURATE/EXCEL", "KERTAS KERJA"].map((t) => (
                <th key={t} rowSpan={2} className={`${head} border-b-[#a6a6a6]`}>{t}</th>
              ))}
              <th rowSpan={2} className={`${head} border-b-[#a6a6a6]`}>PEMBUKUAN<br />MASA</th>
            </tr>
            <tr className="h-5">
              <RowHead n={2} />
              {["21", "21", "23", "4.2", "25", "0,5%", "PPN", ...months].map((t, i) => (
                <th key={i} className={`${head} relative border-b-[#a6a6a6] ${i === 6 ? "border-r-[#9a9a9a]" : ""}`}>
                  {t}
                  {(t === "25" || t === "0,5%") && <Tri />}
                </th>
              ))}
            </tr>
            {rows.map((r) => <DataRow key={r.n} r={r} />)}
            {Array.from({ length: 18 }, (_, i) => <NoteRow key={i} n={20 + i} />)}
          </tbody>
        </table>
      </div>
      <div className="flex w-[22px] shrink-0 flex-col items-center gap-1 pb-1 pt-1.5">
        <Svg w={9} h={7}><path d="M4.500 0L9 7H0z" fill="#9a9a9a" /></Svg>
        <div className="flex min-h-0 flex-1 self-stretch px-1.5"><div className="h-[85%] w-full rounded-full bg-[#8a8a8a]" /></div>
        <Svg w={9} h={7}><path d="M4.500 7L9 0H0z" fill="#9a9a9a" /></Svg>
      </div>
    </div>
  );
}

/* ---------- sheet tabs and status bar ---------- */

const TabSep = () => <span className="h-[18px] w-px shrink-0 bg-[#5a5a5a]" />;

function SheetTabs() {
  return (
    <div className="flex h-[33px] shrink-0 items-center border-b border-[#444] bg-[#0e0c0b]/80 text-[13px]">
      <IconBtn label="Previous sheet" className="ml-4 w-8"><Svg w={7} h={10}><path d="M6 .500L1.500 5 6 9.500" stroke="#8a8a8a" strokeWidth="1.300" /></Svg></IconBtn>
      <IconBtn label="Next sheet" className="w-8"><Svg w={7} h={10}><path d="M1 .500L5.500 5 1 9.500" stroke="#dcdcdc" strokeWidth="1.300" /></Svg></IconBtn>
      <button type="button" className="ml-9 h-7 w-[196px] shrink-0 self-start rounded-b-md border-x-2 border-b-2 border-white bg-linear-to-b from-white to-[#ff8585] px-1.5 text-[14px] font-semibold text-[#3a2626]">
        <span className="block whitespace-nowrap border-b-2 border-[#66603a] leading-[22px]">DATA UPDATE PBK + PAJAK</span>
      </button>
      <span className="ml-1"><TabSep /></span>
      <button type="button" className="ml-1 h-6 w-[154px] shrink-0 rounded bg-[#fe0000]">DAFTAR KLIEN BARU</button>
      <span className="ml-1"><TabSep /></span>
      <button type="button" className="w-[73px] shrink-0">coretax</button>
      <TabSep />
      <button type="button" className="w-[123px] shrink-0">KLIEN Aisyah fx</button>
      <TabSep />
      <button type="button" className="w-40 shrink-0">lawan transaksi MGM</button>
      <TabSep />
      <button type="button" className="w-[182px] shrink-0">lawan transaksi SUJATIM</button>
      <TabSep />
      <button type="button" className="ml-[15px] w-10 shrink-0 overflow-hidden text-left">IMPOR</button>
      <IconBtn label="More sheets" className="w-[30px]"><Svg w={11} h={3}><path d="M0 .500h2.500v2H0zM4.250 .500h2.500v2h-2.500zM8.500 .500H11v2H8.500z" fill="#e0e0e0" /></Svg></IconBtn>
      <IconBtn label="New sheet" className="w-[34px]"><Svg w={12} h={12}><path d="M6 0v12M0 6h12" stroke="#dcdcdc" strokeWidth="1.200" /></Svg></IconBtn>
      <span className="flex w-8 justify-center"><Svg w={2} h={12}><path d="M0 0h2v2H0zM0 5h2v2H0zM0 10h2v2H0z" fill="#c0c0c0" /></Svg></span>
      <div className="flex min-w-0 flex-1 items-center gap-1.5 pl-1 pr-[26px]">
        <Svg w={7} h={9}><path d="M7 0v9L0 4.500z" fill="#9a9a9a" /></Svg>
        <div className="flex min-w-0 flex-1"><div className="h-[9px] w-[29%] rounded-full bg-[#9a9a9a]" /></div>
        <Svg w={7} h={9}><path d="M0 0v9l7-4.500z" fill="#9a9a9a" /></Svg>
      </div>
    </div>
  );
}

function StatusBar() {
  return (
    <div className="flex h-[22px] shrink-0 items-center border-b border-[#444] bg-[#131313] pl-[11px] pr-2 text-[11px]">
      <span className="w-[47px]">Ready</span>
      <span className="w-[66px]">Calculate</span>
      <button type="button" className="flex items-center gap-1 font-semibold">
        <Svg w={15} h={14}>
          <circle cx="6.500" cy="2" r="1.500" stroke="#f0f0f0" /><path d="M1 3.500l3.500 2v3L2.500 13M12 3.500l-3.500 2v2M4.500 5.500h4M4 13l2-4M9 8.500l5 5M14 8.500l-5 5" stroke="#f0f0f0" strokeWidth="1.100" />
        </Svg>
        Accessibility: Investigate
      </button>
      <div className="ml-auto flex items-center">
        <IconBtn label="Normal view" className="h-[21px] w-10 bg-[#262626]"><Svg w={13} h={13}><path d="M.500 .500h12v12H.500zM4.500 .500v12M8.500 .500v12M.500 4.500h12M.500 8.500h12" stroke="#fff" /></Svg></IconBtn>
        <IconBtn label="Page layout view" className="w-10"><Svg w={13} h={13}><path d="M.500 .500h12v12H.500zM3.500 2.500h6v8h-6zM5 4.500h3M5 6.500h3M5 8.500h3" stroke="#fff" /></Svg></IconBtn>
        <IconBtn label="Page break view" className="w-10"><Svg w={13} h={13}><path d="M.500 .500h12v12H.500zM.500 7.500h8v-7M4.500 .500v7" stroke="#fff" /></Svg></IconBtn>
        <IconBtn label="Zoom out" className="ml-0.5 w-4"><Svg w={8} h={8}><path d="M0 4h8" stroke="#fff" /></Svg></IconBtn>
        <input
          type="range"
          aria-label="Zoom"
          defaultValue={50}
          className="mx-0.5 h-3 w-[100px] appearance-none bg-linear-to-b from-transparent from-45% via-[#9a9a9a] via-50% to-transparent to-55% [&::-webkit-slider-thumb]:h-3 [&::-webkit-slider-thumb]:w-1.5 [&::-webkit-slider-thumb]:appearance-none [&::-webkit-slider-thumb]:bg-[#bdbdbd]"
        />
        <IconBtn label="Zoom in" className="w-4"><Svg w={8} h={8}><path d="M0 4h8M4 0v8" stroke="#fff" /></Svg></IconBtn>
        <span className="w-[35px] text-right">100%</span>
      </div>
    </div>
  );
}

/* ---------- taskbar ---------- */

function TaskIcon({ label, running, active, children }: { label: string; running?: boolean; active?: boolean; children: ReactNode }) {
  return (
    <button type="button" aria-label={label} className="flex h-full w-11 shrink-0 items-center justify-center">
      <span className={`relative flex h-10 w-10 items-center justify-center rounded ${active ? "bg-white/10" : ""}`}>
        {children}
        {running && <span className="absolute bottom-0 left-[17px] h-[3px] w-1.5 rounded-full bg-[#9a9a9a]" />}
        {active && <span className="absolute bottom-0 left-3 h-[3px] w-4 rounded-full bg-[#5ab8f0]" />}
      </span>
    </button>
  );
}

function Zebra() {
  return (
    <Svg w={44} h={28}>
      <path d="M1 27c8-4 14-3 20-3 9-1 18-3 21-1-2 2-8 4-16 4z" fill="#dcbf7a" />
      <path d="M3 8l4-4 1.500-3.500 2 2.500c4 3 6 5 10 5.500 4 .300 6-.500 9 0 4 .500 4.500 4 4.500 9l-1-5-1.500 3 .500 8.500h-1.700l-1-8-3-1.500-6 .500-1 9h-1.700l-.500-8.500c-2-2-3-5-5-7L5 10.500z" fill="#c9c0d0" />
      <path d="M7 4.500l2.500 2M9.500 3l1.500 5M12.500 5.500L11 9M15 7.500L13.500 12M18 9l-1.500 6M21 9.500v6M24 9.500v6M27 9.500l-1 6M30 10l-1 6M18.500 18h2M18.500 21h2M30 20h2" stroke="#3a3340" strokeWidth="1" />
      <path d="M3 8l1.500 2.500 1.500-.700L5 7z" fill="#3a3340" />
    </Svg>
  );
}

function Taskbar() {
  return (
    <footer className="flex h-[47px] shrink-0 items-center bg-linear-to-r from-[#232220] from-30% via-[#2d2019] via-50% to-[#1e2126] to-80% text-[12px]">
      <button type="button" className="flex flex-1 items-center gap-1.5 pb-0.5 pl-[18px] text-left leading-4">
        <span className="relative">
          <Svg w={26} h={28}>
            <circle cx="17" cy="17" r="6" fill="#f7a94a" />
            <path d="M7 27a6 6 0 0 1-.500-11.500 7.500 7.500 0 0 1 14-.500A6 6 0 0 1 19.500 27z" fill="#b6d2f5" />
            <path d="M7 27a6 6 0 0 1-5.700-5c6 2.500 16 2 23.200-.500A6 6 0 0 1 19.500 27z" fill="#86aee8" />
          </Svg>
          <span className="absolute -right-0.5 -top-1 size-4 rounded-full bg-[#ff99a4] text-center text-[11px] leading-4 text-black">6</span>
        </span>
        <span className="text-[11px]">
          <span className="block text-white">29°C</span>
          <span className="block text-[#c4c2c0]">Berawan</span>
        </span>
      </button>
      <div className="flex h-full items-center pb-px pl-0.5">
        <TaskIcon label="Start">
          <Svg w={23} h={23}><path d="M0 0h11v11H0zM12 0h11v11H12zM0 12h11v11H0zM12 12h11v11H12z" fill="#4cc2ff" /></Svg>
        </TaskIcon>
        <label className="ml-[3px] mr-0.5 flex h-8 w-[220px] items-center rounded-full border border-white/15 bg-[#47403d] pl-3 pr-1">
          <Svg w={15} h={15}><circle cx="6.500" cy="6.500" r="5.300" stroke="#e0e0e0" strokeWidth="1.600" /><path d="M10.500 10.500L14 14" stroke="#e0e0e0" strokeWidth="1.600" /></Svg>
          <input aria-label="Search the taskbar" placeholder="Search" className="ml-2.5 min-w-0 flex-1 bg-transparent text-[12px] outline-none placeholder:text-[#d8d6d4]" />
          <Zebra />
        </label>
        <TaskIcon label="Task view">
          <Svg w={24} h={22}><rect x="6" y="0" width="18" height="16" rx="1" fill="#eee" /><rect x="0" y="6" width="18" height="15" rx="1" fill="#8a8785" fillOpacity=".9" /></Svg>
        </TaskIcon>
        <TaskIcon label="File Explorer" running>
          <Svg w={24} h={22}>
            <path d="M0 2a2 2 0 0 1 2-2h6l3 3h11a2 2 0 0 1 2 2v15a2 2 0 0 1-2 2H2a2 2 0 0 1-2-2z" fill="#fcd04a" /><path d="M0 2a2 2 0 0 1 2-2h6l2 2-2 3H0z" fill="#dba21c" />
            <path d="M4 22v-5a2 2 0 0 1 2-2h12a2 2 0 0 1 2 2v5z" fill="#1b76c8" />
          </Svg>
        </TaskIcon>
        <TaskIcon label="Edge">
          <Svg w={24} h={24}>
            <circle cx="12" cy="12" r="12" fill="#1677c9" />
            <path d="M0 12C0 5 5 0 12 0s12 5 12 10c0 4-3 6-6 6-2 0-4-1-3-3 1.500-3-1-6-5-6C5 7 1 9 0 12z" fill="#38c4a8" />
            <path d="M9 1c8-2 14 3 15 9 0 4-3 6-6 6-2 0-3.500-1-3-2.500 3-3 0-8-6-12.500z" fill="#6fdc86" />
            <path d="M8 11c-2 4 0 9 5 11 4 1 7-1 9-4-4 2-10 1-12-3-.500-1.500 0-3 1-4.500-1-.500-2-.500-3 .500z" fill="#0b3f86" />
          </Svg>
        </TaskIcon>
        <TaskIcon label="Microsoft Store">
          <Svg w={24} h={24}>
            <path d="M7 6V2.500A1.500 1.500 0 0 1 8.500 1h7A1.500 1.500 0 0 1 17 2.500V6" stroke="#37a7ec" strokeWidth="2" />
            <path d="M.500 6h23v15a3 3 0 0 1-3 3h-17a3 3 0 0 1-3-3z" fill="#f2f4f6" />
            <path d="M7 10h4.500v4.500H7z" fill="#f25022" /><path d="M12.500 10H17v4.500h-4.500z" fill="#7fba00" /><path d="M7 15.500h4.500V20H7z" fill="#00a4ef" /><path d="M12.500 15.500H17V20h-4.500z" fill="#ffb900" />
          </Svg>
        </TaskIcon>
        <TaskIcon label="WhatsApp">
          <Svg w={25} h={25}>
            <path d="M1.500 23.500l1.700-6A11 11 0 1 1 7.200 21.800z" stroke="#25d366" strokeWidth="2" />
            <path d="M8.200 6.800c1-1 1.600-.500 2.500 1.700.300.800-.300 1.300-.900 2 1 2 2.300 3.200 4.400 4.200.800-.700 1.200-1.700 2-1.300 2.200 1 2.500 1.200 2.200 2-.600 2-2.500 2.700-4.500 2.200C10.500 16.500 7 12.500 6.800 9.500c0-1 .700-2 1.400-2.700z" fill="#25d366" />
          </Svg>
        </TaskIcon>
        <TaskIcon label="Chrome" running>
          <Svg w={24} h={24}>
            <path d="M12 12L1.600 6A12 12 0 0 1 22.400 6z" fill="#ea4335" /><path d="M12 12L1.600 6A12 12 0 0 0 12 24l5-9z" fill="#34a853" /><path d="M12 12l5 3-5 9A12 12 0 0 0 22.400 6H12z" fill="#fbbc05" />
            <circle cx="12" cy="12" r="5.600" fill="#fff" /><circle cx="12" cy="12" r="4.400" fill="#4285f4" />
          </Svg>
        </TaskIcon>
        <TaskIcon label="Accurate">
          <Svg w={24} h={24}><circle cx="12" cy="12" r="12" fill="#e2365c" /><path d="M7.500 18L12 6.500 16.500 18" stroke="#fff" strokeWidth="2.600" strokeLinecap="round" strokeLinejoin="round" /></Svg>
        </TaskIcon>
        <TaskIcon label="AnyDesk">
          <Svg w={24} h={24}><path d="M0 0h24v24H0z" fill="#ef443b" /><path d="M10 6.500l5.500 5.500L10 17.500 4.500 12z" fill="#fff" /><path d="M14 7.500l4.500 4.500-4.500 4.500" stroke="#fff" strokeWidth="1.800" /></Svg>
        </TaskIcon>
        <TaskIcon label="Excel" active><ExcelLogo size={24} /></TaskIcon>
        <TaskIcon label="Notepad++" running>
          <Svg w={22} h={24}>
            <path d="M1 1h15l4 4v18H1z" fill="#f6f6f2" /><path d="M1 13l19-3v13H1z" fill="#8fd03c" /><path d="M1 18l19-2v7H1z" fill="#4aa82c" />
            <path d="M5 7v10M8 12h3M12 12h4" stroke="#222" strokeWidth="1.300" /><path d="M21 2l-6 15 2-1 5-13z" fill="#e8b23a" /><path d="M2 1h14" stroke="#777" strokeDasharray="1 1" />
          </Svg>
        </TaskIcon>
      </div>
      <div className="flex h-full flex-1 items-center justify-end bg-linear-to-l from-[#33250f] to-transparent to-40% pb-px pr-5">
        <IconBtn label="Show hidden icons" className="w-8"><Svg w={10} h={6}><path d="M1 5.500l4-4 4 4" stroke="#fff" strokeWidth="1.500" /></Svg></IconBtn>
        <IconBtn label="OneDrive" className="w-8"><Svg w={18} h={15}><path d="M4 13a3.800 3.800 0 0 1-.500-7.500 5 5 0 0 1 9.500-1A4.300 4.300 0 0 1 14 13z" fill="#808080" /><path d="M2 0l15 14.500" stroke="#e8e8e8" strokeWidth="1.300" /></Svg></IconBtn>
        <IconBtn label="Network" className="w-8"><Svg w={17} h={16}><path d="M10.500 1.500h-9v10h11V6M3.500 14.500h7M7 11.500v3M12.500 1.500h3v4h-3zM14 5.500v6" stroke="#fff" strokeWidth="1.200" /></Svg></IconBtn>
        <IconBtn label="Volume" className="w-[18px]"><Svg w={17} h={14}><path d="M.700 4.800h2.500L7 1.500v11L3.200 9.200H.700zM9.500 4.500q2 2.500 0 5M12 3q3.200 4 0 8M14 1.500q4 5.500 0 11" stroke="#fff" strokeWidth="1.100" /></Svg></IconBtn>
        <button type="button" className="ml-3 w-[66px] text-right leading-4">
          <span className="block">12:47</span>
          <span className="block">31/01/2026</span>
        </button>
        <button type="button" aria-label="Notifications" className="ml-2">
          <Svg w={14} h={16}><path d="M7 .500a4.700 4.700 0 0 0-4.700 4.700v4L.500 12.500h13l-1.800-3.300v-4A4.700 4.700 0 0 0 7 .500zM5 13.500a2 2 0 0 0 4 0z" fill="#7fe0fb" /></Svg>
        </button>
      </div>
    </footer>
  );
}

export default function App() {
  return (
    <div className="flex h-screen flex-col overflow-hidden bg-linear-to-r from-[#1e1812] via-[#15110f] to-[#101215] font-['Open_Sans','Noto_Sans',sans-serif] text-[11px] text-white">
      <TitleBar />
      <MenuBar />
      <Ribbon />
      <FormulaBar />
      <Sheet />
      <SheetTabs />
      <StatusBar />
      <Taskbar />
    </div>
  );
}
